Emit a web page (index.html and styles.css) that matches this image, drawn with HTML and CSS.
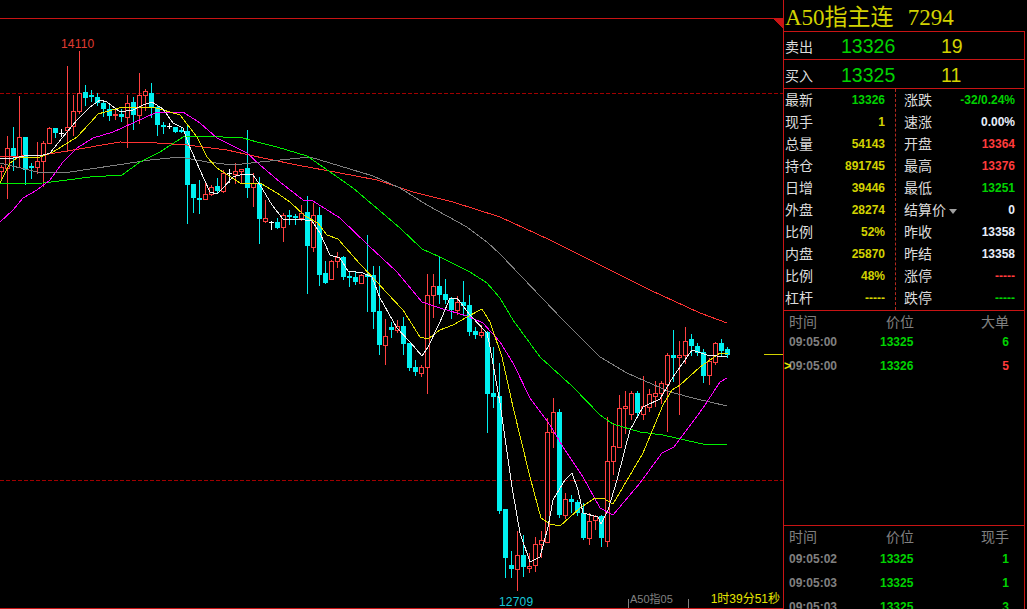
FILE: index.html
```html
<!DOCTYPE html>
<html lang="zh">
<head>
<meta charset="utf-8">
<title>A50指主连</title>
<link rel="stylesheet" href="styles.css">
</head>
<body>
<div class="app">
  <main class="chart">
    <svg id="plot" class="plot" width="783" height="609" viewBox="0 0 783 609"></svg>
    <div class="tag tag-high">14110</div>
    <div class="tag tag-low">12709</div>
    <div class="status"><span class="status-name">A50指05</span><span class="status-time">1时39分51秒</span></div>
  </main>
  <aside class="panel">
    <h1 class="title"><span>A50指主连</span><span class="code">7294</span></h1>
    <div class="boxed">
      <section class="quote"><span class="q-label">卖出</span><span class="q-price">13326</span><span class="q-vol">19</span></section>
      <section class="quote quote-b"><span class="q-label">买入</span><span class="q-price">13325</span><span class="q-vol">11</span></section>
      <section class="stats">
        <div class="stat-col">
          <div class="row"><span>最新</span><b class="g">13326</b></div>
          <div class="row"><span>现手</span><b class="y">1</b></div>
          <div class="row"><span>总量</span><b class="y">54143</b></div>
          <div class="row"><span>持仓</span><b class="y">891745</b></div>
          <div class="row"><span>日增</span><b class="y">39446</b></div>
          <div class="row"><span>外盘</span><b class="y">28274</b></div>
          <div class="row"><span>比例</span><b class="y">52%</b></div>
          <div class="row"><span>内盘</span><b class="y">25870</b></div>
          <div class="row"><span>比例</span><b class="y">48%</b></div>
          <div class="row"><span>杠杆</span><b class="y dash">-----</b></div>
        </div>
        <div class="stat-col stat-right">
          <div class="row"><span>涨跌</span><b class="g">-32/0.24%</b></div>
          <div class="row"><span>速涨</span><b class="w">0.00%</b></div>
          <div class="row"><span>开盘</span><b class="r">13364</b></div>
          <div class="row"><span>最高</span><b class="r">13376</b></div>
          <div class="row"><span>最低</span><b class="g">13251</b></div>
          <div class="row"><span>结算价<i class="caret"></i></span><b class="w">0</b></div>
          <div class="row"><span>昨收</span><b class="w">13358</b></div>
          <div class="row"><span>昨结</span><b class="w">13358</b></div>
          <div class="row"><span>涨停</span><b class="r dash">-----</b></div>
          <div class="row"><span>跌停</span><b class="g dash">-----</b></div>
        </div>
      </section>
      <section class="ticks ticks-top">
        <div class="tick head"><span>时间</span><span>价位</span><span>大单</span></div>
        <div class="tick"><span class="t">09:05:00</span><b class="g">13325</b><b class="g">6</b></div>
        <div class="tick tick-cur"><span class="t"><i class="mark">&gt;</i>09:05:00</span><b class="g">13326</b><b class="r">5</b></div>
      </section>
      <section class="ticks ticks-bot">
        <div class="tick head"><span>时间</span><span>价位</span><span>现手</span></div>
        <div class="tick"><span class="t">09:05:02</span><b class="g">13325</b><b class="g">1</b></div>
        <div class="tick"><span class="t">09:05:03</span><b class="g">13325</b><b class="g">1</b></div>
        <div class="tick"><span class="t">09:05:03</span><b class="g">13325</b><b class="g">3</b></div>
      </section>
    </div>
  </aside>
</div>
<script src="chart.js"></script>
</body>
</html>
```
FILE: styles.css
```css
* { box-sizing: border-box; }
html, body { margin: 0; padding: 0; background: #000; }
body { width: 1027px; height: 609px; overflow: hidden; font-family: "Liberation Sans", "Noto Sans CJK SC", sans-serif; }
.app { display: flex; width: 1027px; height: 609px; }

.chart { position: relative; flex: 0 0 783px; height: 609px; }
.plot { display: block; }
.tag { position: absolute; font: 12px/14px "Liberation Sans", sans-serif; letter-spacing: .2px; }
.tag-high { left: 61px; top: 37px; color: #e03c32; }
.tag-low { left: 499px; top: 595px; color: #19c8d8; }
.status { position: absolute; left: 630px; right: 3px; top: 592px; display: flex; justify-content: space-between; font-size: 12px; line-height: 15px; }
.status-name { color: #808080; font-size: 11px; }
.status-time { color: #e6e600; }

.hline { stroke: #c81414; stroke-width: 1; }
.dashline { stroke: #a00000; stroke-width: 1; stroke-dasharray: 4 2; }
.corner { fill: #c81414; }
.lasttick { stroke: #d2d200; stroke-width: 1; }
.wick-r { stroke: #ff4040; }
.wick-c { stroke: #00f0f0; }
.wick-w { stroke: #fff; }
.body-r { fill: #000; stroke: #ff4040; }
.body-c { fill: #00f0f0; }
.ma { fill: none; stroke-width: 1; }
.ma-white { stroke: #f0f0f0; }
.ma-yellow { stroke: #e6e600; }
.ma-magenta { stroke: #ff00ff; }
.ma-green { stroke: #00f000; }
.ma-grey { stroke: #808080; }
.ma-red { stroke: #ff3232; }

.panel { flex: 0 0 244px; height: 609px; display: flex; flex-direction: column; border-left: 1px solid #c81414; }
.title { flex: none; margin: 0; height: 31px; padding: 5px 0 0 1px; display: flex; gap: 14px; font: 400 23px/26px "Liberation Serif", "Noto Sans CJK SC", serif; color: #d2d200; }
.boxed { width: 241px; flex: 1; min-height: 0; display: flex; flex-direction: column; border-top: 1px solid #c81414; border-right: 1px solid #c81414; }
.quote { flex: none; height: 28px; padding-top: 1px; display: flex; align-items: center; color: #e6e6e6; border-bottom: 1px solid #c81414; }
.quote-b { height: 29px; padding-top: 3px; }
.quote-b .q-label { margin-bottom: 2px; }
.q-label { width: 57px; padding-left: 1px; font-size: 14px; color: #dcdcdc; }
.q-price { width: 100px; font-size: 19.5px; color: #00d200; }
.q-vol { font-size: 19.5px; color: #d2d200; }

.stats { flex: none; height: 222px; display: flex; border-bottom: 1px solid #c81414; }
.stat-col { width: 112px; padding: 0 10px 0 1px; border-right: 1px dashed #b4281e; }
.stat-right { width: 128px; border-right: 0; padding: 0 9px 0 8px; }
.row { height: 22px; display: flex; justify-content: space-between; align-items: center; font-size: 14px; color: #dcdcdc; }
.row span { margin-bottom: 2px; }
.row b { font-size: 12px; font-weight: 700; }
.caret { display: inline-block; width: 0; height: 0; margin-left: 3px; border: 4px solid transparent; border-top: 5px solid #a0a0a0; border-bottom: 0; vertical-align: 1px; }
.g { color: #00d200; }
.y { color: #d2d200; }
.r { color: #ff3c3c; }
.w { color: #e8eefa; }

.ticks { display: flex; flex-direction: column; }
.ticks-top { flex: none; height: 215px; border-bottom: 1px solid #c81414; }
.ticks-bot { flex: 1; min-height: 0; overflow: hidden; }
.tick { flex: none; height: 24px; display: grid; grid-template-columns: 91px 60px 69px; padding-left: 5px; align-items: center; font-size: 12px; color: #808080; }
.tick b { font-weight: 700; }
.tick b:last-of-type { text-align: right; }
.tick .t { font-weight: 700; }
.head { padding-bottom: 3px; font-size: 14px; }
.ticks-top .head { height: 19px; }
.ticks-bot .head { height: 21px; }
.head span:nth-child(2) { padding-left: 6px; }
.head span:nth-child(3) { text-align: right; }
.tick-cur .t { position: relative; }
.mark { position: absolute; left: -5px; top: 0; color: #e6e600; font-style: normal; }
```
FILE: chart.js
```js
// [x index is implied] type, wickHigh, bodyTop, bodyBottom, wickLow
var C = [
['r',165,167,171,180],['r',136,148,168,198],['c',127,148,157,170],['r',96,137,157,167],['c',137,137,170,184],['c',163,166,168,178],
['r',142,161,167,173],['r',141,143,161,186],['r',127,128,143,143],['c',128,128,133,137],['w',129,133,133,136],['r',66,127,130,151],
['r',95,111,126,135],['r',51,93,111,113],['c',85,92,98,105],['c',90,95,97,101],['c',93,97,103,105],['c',102,103,109,116],
['c',105,109,116,120],['r',109,114,115,119],['c',109,114,117,121],['r',95,103,117,147],['c',97,102,115,129],['r',73,95,115,123],
['r',89,91,95,110],['c',83,93,107,117],['c',105,107,125,135],['c',122,125,127,133],['w',123,126,126,128],['c',127,127,132,132],
['c',127,130,132,132],['c',126,131,185,223],['c',184,184,198,212],['c',180,198,200,213],['r',182,194,199,199],['r',185,187,194,195],
['c',178,186,191,193],['r',170,173,191,192],['w',169,173,173,182],['r',163,171,174,183],['r',169,169,171,183],['c',130,168,188,197],
['r',173,183,187,206],['c',177,184,219,243],['r',200,218,221,222],['w',221,222,222,229],['c',218,222,228,228],['r',213,215,227,241],
['c',210,215,217,224],['c',214,216,218,224],['r',205,213,218,220],['c',196,212,246,293],['r',203,215,247,251],['c',207,215,275,285],
['c',261,273,283,283],['r',260,261,279,279],['r',252,257,261,267],['c',256,257,277,279],['c',272,276,277,286],['c',272,277,282,284],
['r',274,275,283,283],['c',235,274,277,311],['c',266,275,312,328],['c',266,311,345,354],['r',319,336,345,364],['c',322,327,330,337],
['r',320,326,330,332],['c',317,326,344,354],['c',343,343,368,370],['c',360,367,372,375],['r',365,367,373,376],['r',274,295,367,393],
['r',274,286,295,317],['c',257,286,295,303],['c',279,294,300,303],['c',297,299,310,318],['r',296,302,310,314],['c',281,302,306,315],
['c',295,305,332,335],['c',327,331,335,338],['r',325,332,335,337],['c',331,332,394,432],['c',347,393,397,407],['c',363,396,511,513],
['c',509,509,558,577],['c',551,565,569,577],['r',531,555,569,590],['c',535,555,567,576],['r',553,566,568,572],['r',537,544,565,571],
['r',531,540,544,557],['r',418,432,542,542],['r',398,412,432,447],['c',409,412,515,517],['r',493,499,515,518],['c',495,499,502,512],
['c',500,502,513,515],['c',503,513,538,539],['r',513,521,538,544],['r',515,516,520,529],['c',515,516,538,546],['r',417,461,541,546],
['r',423,446,461,474],['r',395,408,447,447],['r',391,406,408,433],['r',391,393,414,419],['c',391,393,413,415],['r',376,406,414,419],
['r',389,394,407,411],['r',381,393,396,406],['r',381,383,393,403],['r',353,355,384,431],['c',330,355,358,381],['r',341,355,357,414],
['r',327,341,355,363],['c',334,339,346,355],['c',343,346,353,355],['c',349,352,376,382],['r',358,361,375,384],['r',342,343,362,364],
['c',339,343,351,355],['c',347,349,355,357]
];
var LINES = {
 red: "0,157 43,155 73,150 120,142 157,143 187,145 227,150 263,158 297,165 340,173 377,180 413,192 453,202 500,217 550,240 600,265 650,290 700,313 727,323",
 grey: "0,163 37,172 70,172 117,165 150,160 180,157 207,162 233,165 260,162 280,160 310,157 340,166 373,176 400,188 427,205 467,227 487,242 500,254 563,320 600,357 627,373 670,392 697,399 727,406",
 green: "0,184 43,183 67,180 90,177 122,175 140,162 160,152 183,137 203,136 243,138 257,142 277,147 307,156 323,167 353,188 373,205 400,228 422,249 440,257 470,272 487,283 500,298 513,320 540,357 573,387 600,415 613,424 640,432 663,435 707,445 727,444",
 magenta: "0,222 13,210 23,198 37,190 50,180 63,162 77,148 93,138 113,132 133,123 155,113 183,112 200,123 217,138 247,153 260,165 280,182 303,200 313,201 340,218 368,245 397,272 422,302 440,308 467,316 483,323 500,342 513,363 530,398 550,425 563,447 583,477 600,508 613,515 640,483 662,453 674,447 703,408 720,382 727,378",
 yellow: "0,183 10,163 17,158 40,157 53,152 77,137 90,123 98,114 123,107 153,107 180,115 197,137 207,157 217,168 240,183 260,183 277,193 290,202 305,216 318,223 327,235 338,239 360,264 377,282 387,293 403,310 420,337 428,339 440,330 453,325 467,317 482,309 490,322 502,357 513,407 530,477 541,518 550,524 560,526 580,508 595,498 603,498 613,504 643,453 663,405 672,390 680,385 700,367 720,353 728,353",
 white: "0,158 13,158 30,155 40,156 50,153 62,138 77,120 90,107 100,100 107,102 120,112 133,110 143,105 152,102 163,109 173,123 183,128 188,143 200,170 210,192 217,194 223,188 233,177 243,174 253,175 260,185 272,205 283,219 297,219 312,221 320,233 330,255 340,258 348,271 363,273 372,277 380,298 397,328 410,342 422,356 428,347 440,322 450,298 457,298 470,315 487,333 490,347 500,403 512,487 520,533 530,562 540,557 548,527 553,500 565,480 572,473 578,490 583,513 598,517 601,524 608,510 617,480 630,430 643,407 660,399 673,377 692,350 707,355 727,357"
};
var NS = "http://www.w3.org/2000/svg", svg = document.getElementById("plot");
function add(tag, attrs) {
  var e = document.createElementNS(NS, tag);
  for (var k in attrs) e.setAttribute(k, attrs[k]);
  e.setAttribute("shape-rendering", "crispEdges");
  svg.appendChild(e);
  return e;
}
function hl(y, x2, cls) { add("line", { x1: 0, x2: x2, y1: y + .5, y2: y + .5, "class": cls }); }
hl(18, 783, "hline");
hl(93, 783, "dashline");
hl(480, 783, "dashline");
hl(608, 783, "hline");
add("polygon", { points: "773,19 783,19 783,28", "class": "corner" });
add("line", { x1: 764, x2: 783, y1: 354.5, y2: 354.5, "class": "lasttick" });
add("line", { x1: 628.5, x2: 628.5, y1: 599, y2: 608, "class": "ma-grey" });
add("line", { x1: 688.5, x2: 688.5, y1: 599, y2: 608, "class": "ma-grey" });
C.forEach(function (c, i) {
  var x = 1 + 6 * i, t = c[0];
  add("line", { x1: x + .5, x2: x + .5, y1: c[1], y2: c[4] + 1, "class": "wick-" + t });
  if (t === "w") add("line", { x1: x - 2, x2: x + 3, y1: c[2] + .5, y2: c[2] + .5, "class": "wick-w" });
  else if (t === "r") add("rect", { x: x - 1.5, y: c[2] + .5, width: 4, height: Math.max(c[3] - c[2], 1), "class": "body-r" });
  else add("rect", { x: x - 2, y: c[2], width: 5, height: Math.max(c[3] - c[2], 2), "class": "body-c" });
});
["red", "grey", "green", "magenta", "yellow", "white"].forEach(function (n) {
  add("polyline", { points: LINES[n], "class": "ma ma-" + n });
});
```
